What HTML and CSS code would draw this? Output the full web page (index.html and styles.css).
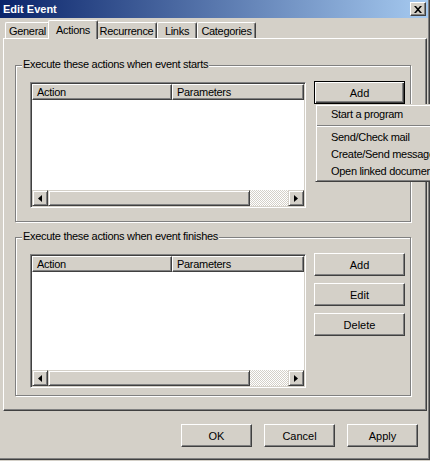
FILE: index.html
```html
<!DOCTYPE html>
<html lang="en">
<head>
    <meta charset="UTF-8">
    <meta name="viewport" content="width=device-width, initial-scale=1.0">
    <title>Edit Event</title>
    <link rel="stylesheet" href="styles.css">
</head>
<body>

    <div class="window">
        <div class="titlebar">
            <span class="title">Edit Event</span>
            <button class="close-btn" aria-label="Close">
                <svg width="8" height="7" viewBox="0 0 8 7">
                    <path d="M0 0h2l2 2.2L6 0h2L5 3.5 8 7H6L4 4.8 2 7H0l3-3.5z" fill="#000"/>
                </svg>
            </button>
        </div>

        <div class="tabs">
            <div class="tab tab-general">General</div>
            <div class="tab tab-actions selected">Actions</div>
            <div class="tab tab-recurrence">Recurrence</div>
            <div class="tab tab-links">Links</div>
            <div class="tab tab-categories">Categories</div>
        </div>

        <div class="panel">
            <div class="group group-start">
                <span class="legend">Execute these actions when event starts</span>
                <div class="listview list-start">
                    <div class="list-header">
                        <span class="col col-action">Action</span>
                        <span class="col col-params">Parameters</span>
                    </div>
                    <div class="list-body"></div>
                    <div class="hscroll">
                        <span class="arrow"><svg width="4" height="7" viewBox="0 0 4 7"><path d="M4 0v7L0 3.5z" fill="#000"/></svg></span>
                        <span class="thumb"></span>
                        <span class="track"></span>
                        <span class="arrow"><svg width="4" height="7" viewBox="0 0 4 7"><path d="M0 0v7l4-3.5z" fill="#000"/></svg></span>
                    </div>
                </div>
                <div class="btn-col">
                    <button class="btn default">Add</button>
                </div>
            </div>

            <div class="group group-finish">
                <span class="legend">Execute these actions when event finishes</span>
                <div class="listview list-finish">
                    <div class="list-header">
                        <span class="col col-action">Action</span>
                        <span class="col col-params">Parameters</span>
                    </div>
                    <div class="list-body"></div>
                    <div class="hscroll">
                        <span class="arrow"><svg width="4" height="7" viewBox="0 0 4 7"><path d="M4 0v7L0 3.5z" fill="#000"/></svg></span>
                        <span class="thumb"></span>
                        <span class="track"></span>
                        <span class="arrow"><svg width="4" height="7" viewBox="0 0 4 7"><path d="M0 0v7l4-3.5z" fill="#000"/></svg></span>
                    </div>
                </div>
                <div class="btn-col">
                    <button class="btn">Add</button>
                    <button class="btn">Edit</button>
                    <button class="btn">Delete</button>
                </div>
            </div>
        </div>

        <div class="footer">
            <button class="btn small">OK</button>
            <button class="btn small">Cancel</button>
            <button class="btn small">Apply</button>
        </div>

        <!-- popup opened from the first Add button -->
        <div class="popup-menu">
            <div class="menu-item">Start a program</div>
            <div class="menu-sep"></div>
            <div class="menu-item">Send/Check mail</div>
            <div class="menu-item">Create/Send message</div>
            <div class="menu-item">Open linked document</div>
        </div>
    </div>

</body>
</html>
```

FILE: styles.css
```css
:root {
    --face: #d4d0c8;
    --light: #ffffff;
    --shadow: #808080;
    --dark: #404040;
}

* {
    box-sizing: border-box;
}

body {
    margin: 0;
    width: 430px;
    height: 461px;
    overflow: hidden;
    background: var(--face);
    font-family: "Liberation Sans", Arial, sans-serif;
    font-size: 11px;
    letter-spacing: -0.3px;
    color: #000;
}

.window {
    position: relative;
    height: 460px;
    box-shadow: inset -1px -1px 0 var(--dark), inset -2px -2px 0 var(--shadow);
}

.titlebar {
    height: 18px;
    margin-right: 2px;
    padding: 0 2px 0 3px;
    display: flex;
    align-items: center;
    justify-content: space-between;
    background: linear-gradient(to right, #0a246a, #a6caf0);
}

.title {
    color: #fff;
    font-weight: bold;
    letter-spacing: 0;
}

.close-btn {
    width: 16px;
    height: 14px;
    padding: 0;
    display: flex;
    align-items: center;
    justify-content: center;
    background: var(--face);
    border: 1px solid;
    border-color: var(--light) var(--dark) var(--dark) var(--light);
    box-shadow: inset -1px -1px 0 var(--shadow);
}

/* tab strip */
.tabs {
    display: flex;
    align-items: flex-end;
    height: 20px;
    padding-left: 5px;
}

.tab {
    height: 16px;
    padding-top: 2px;
    line-height: 13px;
    text-align: center;
    background: var(--face);
    border-top: 1px solid var(--light);
    border-left: 1px solid var(--light);
    border-right: 1px solid var(--dark);
    box-shadow: inset -1px 0 0 var(--shadow);
    border-radius: 2px 2px 0 0;
}

.tab-general { width: 45px; }
.tab-actions { width: 46px; }
.tab-recurrence { width: 61px; }
.tab-links { width: 40px; }
.tab-categories { width: 59px; }

.tab.selected {
    position: relative;
    z-index: 1;
    width: 50px;
    height: 19px;
    margin: 0 -2px -1px;
    padding-top: 3px;
}

.panel {
    height: 373px;
    margin: 0 3px;
    padding: 26px 0 0 11px;
    border: 1px solid;
    border-color: var(--light) var(--dark) var(--dark) var(--light);
    box-shadow: inset -1px -1px 0 var(--shadow);
}

/* group boxes */
.group {
    position: relative;
    width: 396px;
    display: flex;
    gap: 8px;
    padding: 16px 0 0 14px;
    border: 1px solid var(--shadow);
    box-shadow: 1px 1px 0 var(--light), inset 1px 1px 0 var(--light);
}

.group-start {
    height: 157px;
}

.group-finish {
    height: 159px;
    margin-top: 15px;
}

.legend {
    position: absolute;
    top: -8px;
    left: 6px;
    padding: 0 1px;
    line-height: 13px;
    background: var(--face);
}

/* list views */
.listview {
    width: 276px;
    display: flex;
    flex-direction: column;
    background: #fff;
    border: 1px solid;
    border-color: var(--shadow) var(--light) var(--light) var(--shadow);
    box-shadow: inset 1px 1px 0 var(--dark), inset -1px -1px 0 var(--face);
    padding: 1px;
}

.list-start {
    height: 126px;
}

.list-finish {
    height: 134px;
}

.list-header {
    display: flex;
    height: 16px;
    background: var(--face);
}

.col {
    line-height: 13px;
    padding: 1px 0 0 4px;
    border: 1px solid;
    border-color: var(--light) var(--dark) var(--dark) var(--light);
    box-shadow: inset -1px -1px 0 var(--shadow);
}

.col-action {
    width: 140px;
}

.col-params {
    flex: 1;
    padding-left: 4px;
}

.list-body {
    flex: 1;
}

.hscroll {
    display: flex;
    height: 16px;
}

.arrow,
.thumb {
    display: flex;
    align-items: center;
    justify-content: center;
    background: var(--face);
    border: 1px solid;
    border-color: var(--face) var(--dark) var(--dark) var(--face);
    box-shadow: inset 1px 1px 0 var(--light), inset -1px -1px 0 var(--shadow);
}

.arrow {
    width: 16px;
}

.thumb {
    width: 202px;
}

.track {
    flex: 1;
    background-color: var(--face);
    background-image: repeating-conic-gradient(#fff 0 25%, var(--face) 0 50%);
    background-size: 2px 2px;
}

/* buttons */
.btn-col {
    display: flex;
    flex-direction: column;
    gap: 7px;
    margin-top: -1px;
}

.btn {
    width: 91px;
    height: 23px;
    padding: 0;
    font: inherit;
    color: #000;
    background: var(--face);
    border: 1px solid;
    border-color: var(--light) var(--dark) var(--dark) var(--light);
    box-shadow: inset -1px -1px 0 var(--shadow);
}

.btn.default {
    border-color: #000;
    box-shadow: inset 1px 1px 0 var(--light), inset -1px -1px 0 var(--dark), inset -2px -2px 0 var(--shadow);
}

.btn.small {
    width: 71px;
}

.footer {
    display: flex;
    justify-content: flex-end;
    gap: 12px;
    padding: 13px 12px 0 0;
}

/* popup menu */
.popup-menu {
    position: absolute;
    top: 104px;
    left: 315px;
    width: 130px;
    padding: 1px 0;
    background: var(--face);
    border: 1px solid;
    border-color: var(--face) var(--dark) var(--dark) var(--face);
    box-shadow: inset 1px 1px 0 var(--light), inset -1px -1px 0 var(--shadow);
}

.menu-item {
    height: 17px;
    line-height: 17px;
    padding-left: 15px;
    white-space: nowrap;
}

.menu-sep {
    height: 2px;
    margin: 2px 1px;
    border-top: 1px solid var(--shadow);
    border-bottom: 1px solid var(--light);
}
```
